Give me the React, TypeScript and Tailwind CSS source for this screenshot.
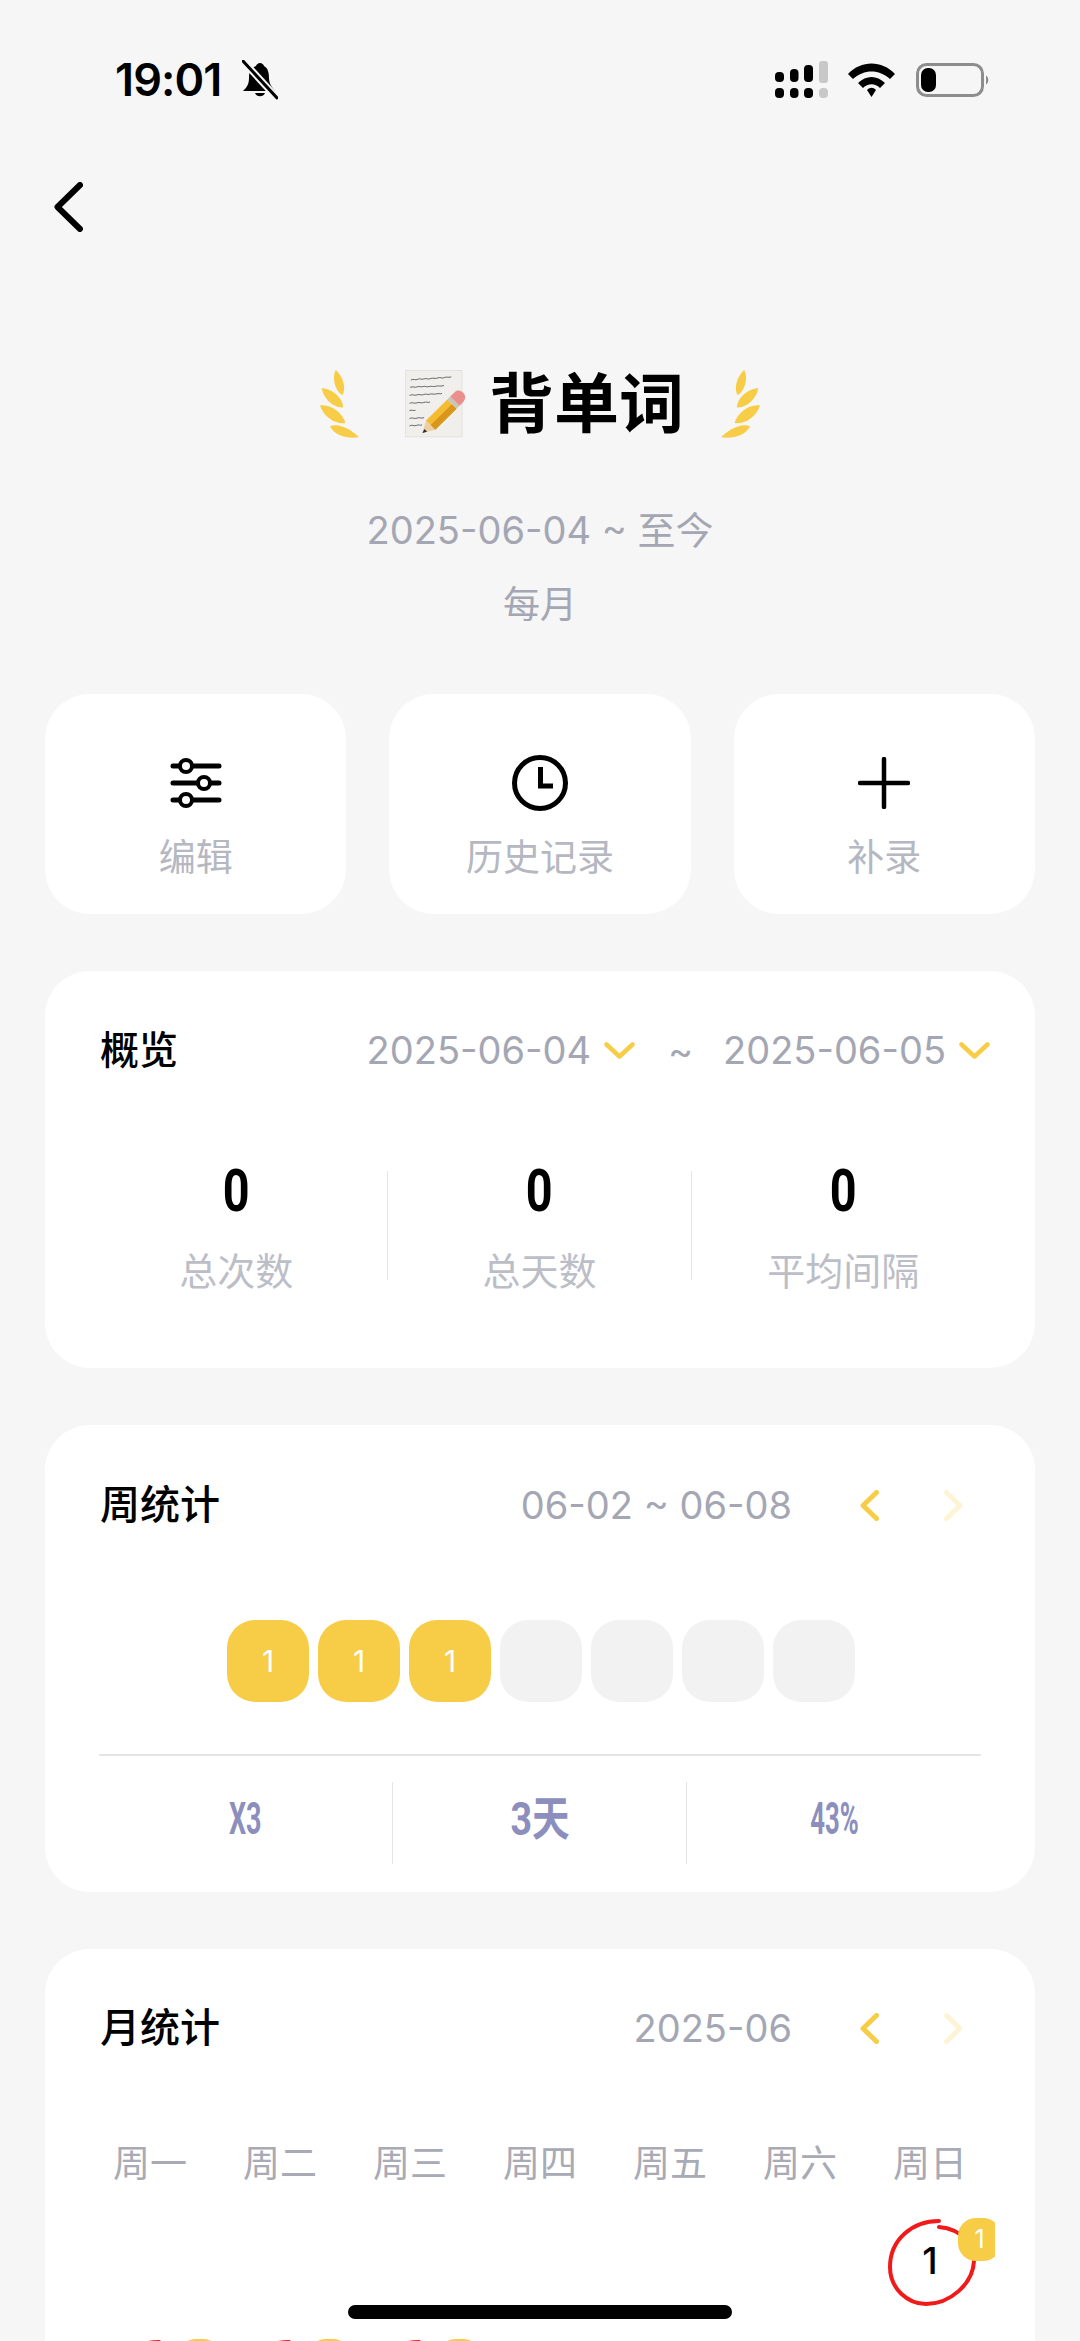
import type { ReactNode } from "react";

const FONT = "font-['Inter','Noto_Sans_CJK_SC',sans-serif]";

function Laurel({ flip }: { flip?: boolean }) {
  return (
    <svg
      viewBox="0 0 118 205"
      className={`w-[39px] h-[68px] shrink-0 ${flip ? "-scale-x-100" : ""}`}
      fill="#f7cd48"
    >
      <path d="M48 0C70 20 80 55 68 76C45 65 35 20 48 0Z" />
      <path d="M5 55C35 55 70 85 70 113C40 115 10 85 5 55Z" />
      <path d="M0 107C30 100 70 130 77 160C45 165 10 140 0 107Z" />
      <path d="M30 170C60 158 100 185 118 203C85 208 45 200 30 170Z" />
    </svg>
  );
}

function MemoEmoji() {
  return (
    <svg viewBox="0 0 186 205" className="w-[62px] h-[68px] shrink-0">
      <rect x="0" y="0" width="173" height="203" fill="#e2e1de" />
      <rect x="3" y="3" width="167" height="197" fill="#f0efec" />
      <g fill="none" stroke="#45454a" strokeWidth="2.4" strokeLinecap="round">
        <path d="M18 30c8-6 12 3 20-2s10 3 18-1 12 3 20-1 14 2 22-2 12 3 20-1 10 1 20-2" />
        <path d="M16 52c8-5 12 3 20-1s10 2 18-1 10 3 18 0 12 2 20-1 14 2 24-2" />
        <path d="M14 76c8-5 14 3 22-1s12 3 20-1 10 2 18-1 12 2 20-1 10 2 16-1" />
        <path d="M14 100c8-5 14 3 22-1s12 3 20-1 10 2 18-1" />
        <path d="M14 122c6-3 10 2 16 0" />
        <path d="M14 146c8-5 14 3 22-1s12 3 20-1" />
        <path d="M14 168c8-5 12 3 20-1s10 2 16-1" />
      </g>
      <polygon points="63,152 91,180 52,190" fill="#eccfa6" />
      <polygon points="58,178 66,186 52,190" fill="#2c2c2c" />
      <polygon points="63,152 127,89 155,117 91,180" fill="#f5bc31" />
      <polygon points="77,166 141,103 155,117 91,180" fill="#d9961c" />
      <polygon points="127,89 136,80 164,108 155,117" fill="#c9c5b8" />
      <path d="M136 80L150 66C158 58 172 62 178 72C184 82 180 90 174 98L164 108Z" fill="#ea8e8e" />
    </svg>
  );
}

function Chevron({ dir, pale }: { dir: "left" | "right"; pale?: boolean }) {
  return (
    <svg viewBox="0 0 19 31" className="w-[19px] h-[31px] shrink-0" fill="none">
      <path
        d={dir === "left" ? "M16.5 2.5L3 15.5L16.5 28.5" : "M2.5 2.5L16 15.5L2.5 28.5"}
        stroke={pale ? "#fdf4d6" : "#f7cd48"}
        strokeWidth="5"
        strokeLinecap="round"
        strokeLinejoin="round"
      />
    </svg>
  );
}

function ChevronDown() {
  return (
    <svg viewBox="0 0 31 17" className="w-[31px] h-[17px] shrink-0" fill="none">
      <path d="M2.5 2.5L15.5 14.5L28.5 2.5" stroke="#f7cd48" strokeWidth="4.5" strokeLinecap="round" strokeLinejoin="round" />
    </svg>
  );
}

function ActionButton({ label, children }: { label: string; children: ReactNode }) {
  return (
    <div className="flex-1 h-[220px] bg-white rounded-[45px] flex flex-col items-center pt-[62px]">
      <div className="h-[54px] flex items-center justify-center">{children}</div>
      <div className="mt-[23px] text-[37px] leading-[50px] text-[#b5b7c1]">{label}</div>
    </div>
  );
}

function Stat({ label, border }: { label: string; border?: boolean }) {
  return (
    <div className={`h-[109px] flex flex-col items-center relative ${border ? "border-r border-[#e6e6e8]" : ""}`}>
      <span className="font-['Roboto',sans-serif] font-bold text-[60px] leading-[44px] -mt-[2px] text-black scale-x-[0.78]">0</span>
      <span className="mt-[33px] text-[38px] leading-[50px] text-[#bcbec7]">{label}</span>
    </div>
  );
}

function Ring() {
  return (
    <svg viewBox="0 0 88 88" className="absolute left-[23px] top-[1px] w-[88px] h-[88px]" fill="none">
      <path
        d="M51 2C25 2 2 20 2 48C2 70 20 85 38 85C62 85 85 65 86 42C87 28 75 10 51 8"
        stroke="#f01a1a"
        strokeWidth="4"
        strokeLinecap="round"
      />
    </svg>
  );
}

function Day({ n, marked, count }: { n?: number; marked?: boolean; count?: number }) {
  return (
    <div className="relative h-[121px] overflow-hidden">
      {marked && <Ring />}
      {n !== undefined && (
        <span className="absolute left-0 w-[130px] top-[21px] text-center text-[37px] leading-[44px] font-medium text-black">{n}</span>
      )}
      {marked && (
        <span className="absolute left-[93px] top-0 w-[43px] h-[43px] rounded-[18px] bg-[#f7cd48] text-white text-[25px] leading-[43px] text-center">
          {count}
        </span>
      )}
    </div>
  );
}

const WEEK = [1, 1, 1, 0, 0, 0, 0];
const WEEKDAYS = ["周一", "周二", "周三", "周四", "周五", "周六", "周日"];

export default function App() {
  return (
    <div className={`relative w-[1080px] h-[2341px] overflow-hidden bg-[#f6f6f6] ${FONT}`}>
      {/* Status bar */}
      <div className="flex h-[160px] items-center justify-between pl-[115px] pr-[90px]">
        <div className="flex items-center gap-[13px]">
          <span className="w-[114px] whitespace-nowrap text-[45px] leading-[50px] font-semibold text-black tracking-[-0.9px]">
            19:01
          </span>
          <svg viewBox="0 0 36 40" className="w-[36px] h-[40px]">
            <path d="M18 3c-2 0-4 2-4 3C8 8 7 13 7 18c0 6-2 9-6 13h32c-3-4-6-7-6-13 0-5-1-10-5-12 0-1-2-3-4-3Z" fill="#000" />
            <path d="M13 33a5.5 5.5 0 0 0 10 0Z" fill="#000" />
            <path d="M1 1L35 38" stroke="#f6f6f6" strokeWidth="7" />
            <path d="M1 1L35 38" stroke="#000" strokeWidth="3" strokeLinecap="round" />
          </svg>
        </div>
        <div className="flex items-center">
          <svg viewBox="0 0 53 38" className="w-[53px] h-[38px]" fill="#000">
            <rect x="0" y="11" width="9" height="10" rx="4" />
            <rect x="15" y="8" width="8.5" height="13" rx="4" />
            <rect x="29" y="4" width="9" height="17" rx="4" />
            <rect x="44" y="0" width="9" height="22" rx="3" fill="#c8c8c8" />
            <rect x="0" y="27" width="9" height="10" rx="4" />
            <rect x="15" y="27" width="8.5" height="10" rx="4" />
            <rect x="29" y="27" width="9" height="10" rx="4" />
            <rect x="44" y="27" width="9" height="10" rx="4" fill="#c8c8c8" />
          </svg>
          <svg viewBox="0 0 47 34" className="w-[47px] h-[34px] ml-[20px]" fill="#000">
            <path d="M0 11C13 -3 34 -3 47 11L42 16C31 6 16 6 5 16Z" />
            <path d="M10 20C18 12 29 12 37 20L32 25C27 20 20 20 15 25Z" />
            <path d="M19 27C22 24 25 24 28 27L23.5 34Z" />
          </svg>
          <svg viewBox="0 0 74 34" className="w-[74px] h-[34px] ml-[21px]" fill="none">
            <rect x="1.5" y="1.5" width="65" height="31" rx="9" stroke="#8d8d8d" strokeWidth="3" />
            <rect x="5" y="5" width="15" height="24" rx="7" fill="#000" />
            <path d="M70 12.5C73 14 73 20 70 21.5Z" fill="#8d8d8d" />
          </svg>
        </div>
      </div>

      {/* Back */}
      <div className="pl-[54px] mt-[22px]">
        <svg viewBox="0 0 29 50" className="w-[29px] h-[50px]" fill="none">
          <path d="M26 3L3.5 25L26 47" stroke="#000" strokeWidth="6" strokeLinecap="round" strokeLinejoin="round" />
        </svg>
      </div>

      {/* Title */}
      <div className="mt-[138px] h-[68px] flex items-center justify-center">
        <Laurel />
        <div className="ml-[46px]">
          <MemoEmoji />
        </div>
        <span className="ml-[22px] text-[65px] leading-[68px] font-bold text-black">背单词</span>
        <div className="ml-[37px]">
          <Laurel flip />
        </div>
      </div>
      <div className="mt-[67px] text-center text-[38px] leading-[50px] text-[#a4a7b3]">2025-06-04 ~ 至今</div>
      <div className="mt-[25px] text-center text-[37px] leading-[50px] text-[#a4a7b3]">每月</div>

      {/* Actions */}
      <div className="mt-[64px] px-[45px] flex gap-[43px]">
        <ActionButton label="编辑">
          <svg viewBox="0 0 52 52" className="w-[52px] h-[52px]" fill="none" stroke="#000" strokeLinecap="round">
            <path d="M3 9H49M3 26H49M3 43H49" strokeWidth="5" />
            <circle cx="16" cy="9" r="6" fill="#fff" strokeWidth="4" />
            <circle cx="34" cy="26" r="6" fill="#fff" strokeWidth="4" />
            <circle cx="16" cy="43" r="6" fill="#fff" strokeWidth="4" />
          </svg>
        </ActionButton>
        <ActionButton label="历史记录">
          <svg viewBox="0 0 56 56" className="w-[56px] h-[56px]" fill="none" stroke="#000" strokeWidth="5">
            <circle cx="28" cy="28" r="25.5" />
            <path d="M28.5 12V31H41" />
          </svg>
        </ActionButton>
        <ActionButton label="补录">
          <svg viewBox="0 0 52 52" className="w-[52px] h-[52px]" fill="none" stroke="#000" strokeWidth="4.5" strokeLinecap="round">
            <path d="M26 2V50M2 26H50" />
          </svg>
        </ActionButton>
      </div>

      {/* Overview */}
      <div className="mt-[57px] mx-[45px] h-[397px] bg-white rounded-[45px] pt-[54px]">
        <div className="flex items-center justify-between pl-[55px] pr-[45px] h-[50px]">
          <span className="text-[39px] leading-[50px] font-medium text-black">概览</span>
          <div className="flex items-center text-[38px] leading-[50px] text-[#a4a7b3]">
            <span>2025-06-04</span>
            <span className="ml-[13px]"><ChevronDown /></span>
            <span className="ml-[33px] w-[22px] text-center">~</span>
            <span className="ml-[33px]">2025-06-05</span>
            <span className="ml-[13px]"><ChevronDown /></span>
          </div>
        </div>
        <div className="mt-[96px] mx-[40px] grid grid-cols-3">
          <Stat label="总次数" border />
          <Stat label="总天数" border />
          <Stat label="平均间隔" />
        </div>
      </div>

      {/* Weekly */}
      <div className="mt-[57px] mx-[45px] h-[467px] bg-white rounded-[45px] pt-[55px]">
        <div className="flex items-center justify-between pl-[55px] pr-[72px] h-[50px]">
          <span className="text-[40px] leading-[50px] font-medium text-black">周统计</span>
          <div className="flex items-center">
            <span className="text-[38px] leading-[50px] text-[#a4a7b3]">06-02 ~ 06-08</span>
            <span className="ml-[68px]"><Chevron dir="left" /></span>
            <span className="ml-[65px]"><Chevron dir="right" pale /></span>
          </div>
        </div>
        <div className="mt-[90px] pl-[2px] flex justify-center gap-[9px]">
          {WEEK.map((v, i) => (
            <div
              key={i}
              className={`w-[82px] h-[82px] rounded-[28px] flex items-center justify-center text-[30px] text-white ${
                v ? "bg-[#f7cd48]" : "bg-[#f2f2f2]"
              }`}
            >
              {v ? v : ""}
            </div>
          ))}
        </div>
        <div className="mt-[52px] mx-[54px] h-[2px] bg-[#e4e4e6]" />
        <div className="mt-[26px] mx-[54px] grid grid-cols-3 h-[82px] font-['Roboto','Noto_Sans_CJK_SC',sans-serif] font-bold text-[#8c8fbd]">
          <div className="flex items-center justify-center pb-[10px] border-r border-[#e4e4e6]">
            <span className="text-[45px] leading-none scale-x-[0.6]">X3</span>
          </div>
          <div className="flex items-center justify-center pb-[10px] border-r border-[#e4e4e6]">
            <span className="text-[47px] leading-none scale-x-[0.8]">3天</span>
          </div>
          <div className="flex items-center justify-center pb-[10px]">
            <span className="text-[45px] leading-none scale-x-[0.57]">43%</span>
          </div>
        </div>
      </div>

      {/* Monthly */}
      <div className="mt-[57px] mx-[45px] bg-white rounded-t-[45px] pt-[54px] h-[500px]">
        <div className="flex items-center justify-between pl-[55px] pr-[72px] h-[50px]">
          <span className="text-[40px] leading-[50px] font-medium text-black">月统计</span>
          <div className="flex items-center">
            <span className="text-[38px] leading-[50px] text-[#a4a7b3]">2025-06</span>
            <span className="ml-[68px]"><Chevron dir="left" /></span>
            <span className="ml-[65px]"><Chevron dir="right" pale /></span>
          </div>
        </div>
        <div className="mt-[86px] mx-[40px] grid grid-cols-7 text-center text-[37px] leading-[50px] text-[#a8aab5]">
          {WEEKDAYS.map((d) => (
            <span key={d}>{d}</span>
          ))}
        </div>
        <div className="mt-[29px] mx-[40px] grid grid-cols-7">
          <Day />
          <Day />
          <Day />
          <Day />
          <Day />
          <Day />
          <Day n={1} marked count={1} />
          <Day marked />
          <Day marked />
          <Day marked />
        </div>
      </div>

      {/* Home indicator */}
      <div className="absolute left-[348px] top-[2305px] w-[384px] h-[14px] rounded-full bg-black" />
    </div>
  );
}
